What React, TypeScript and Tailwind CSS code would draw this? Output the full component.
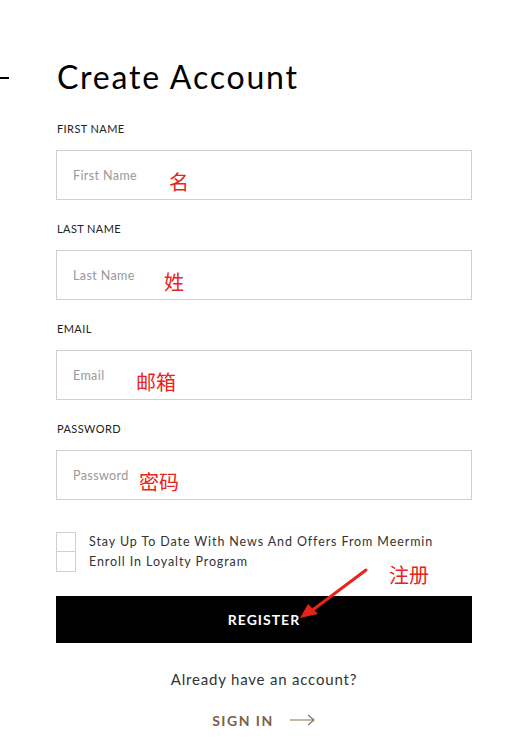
import React from 'react';

const fields = [
  { label: 'FIRST NAME', placeholder: 'First Name', note: '名', noteLeft: 'left-[112px]' },
  { label: 'LAST NAME', placeholder: 'Last Name', note: '姓', noteLeft: 'left-[107px]' },
  { label: 'EMAIL', placeholder: 'Email', note: '邮箱', noteLeft: 'left-[79px]' },
  { label: 'PASSWORD', placeholder: 'Password', note: '密码', noteLeft: 'left-[82px]' },
];

const App: React.FC = () => {
  return (
    <div className="relative w-[531px] h-[745px] bg-white overflow-hidden font-['Lato',sans-serif] text-black">
      {/* stray dash on the left edge */}
      <div className="absolute left-0 top-[77px] w-[9px] h-[2px] bg-black" />

      <div className="ml-[56px] w-[416px] pt-[57px]">
        <h1 className="text-[32px] leading-[40px] font-normal tracking-[1.8px] pl-[1px]">Create Account</h1>

        <form className="mt-[25px] flex flex-col gap-[22px]">
          {fields.map((f) => (
            <div key={f.label}>
              <label className="block text-[11px] leading-[13px] tracking-[0.4px] text-[#222] pl-[1px]">
                {f.label}
              </label>
              <div className="relative mt-[15px] h-[50px] border border-[#cfcfcf] flex items-center">
                <span className="pl-[16px] pt-[3px] text-[12.5px] tracking-[0.4px] text-[#999]">{f.placeholder}</span>
                <span
                  className={`absolute ${f.noteLeft} top-[19px] text-[20px] leading-[24px] text-[#e8231b] font-['Noto_Sans_CJK_SC',sans-serif]`}
                >
                  {f.note}
                </span>
              </div>
            </div>
          ))}
        </form>

        <div className="mt-[32px] flex flex-col">
          <div className="flex items-center gap-[13px]">
            <div className="w-[20px] h-[20px] border border-[#cfcfcf]" />
            <span className="text-[12.5px] tracking-[0.9px] text-[#333]">
              Stay Up To Date With News And Offers From Meermin
            </span>
          </div>
          <div className="flex items-center gap-[13px]">
            <div className="w-[20px] h-[20px] border border-[#cfcfcf] border-t-0" />
            <span className="text-[12.5px] tracking-[0.9px] text-[#333]">Enroll In Loyalty Program</span>
          </div>
        </div>

        <div className="relative mt-[24px]">
          <button className="w-full h-[47px] bg-black text-white text-[14px] font-bold tracking-[1px]">
            REGISTER
          </button>
          <span className="absolute left-[333px] -top-[33px] text-[20px] leading-[24px] text-[#e8231b] font-['Noto_Sans_CJK_SC',sans-serif]">
            注册
          </span>
          <svg className="absolute left-[240px] -top-[30px]" width="74" height="60" viewBox="0 0 74 60">
            <path d="M70 4 L14 46" stroke="#e8231b" strokeWidth="3" strokeLinecap="round" />
            <path d="M4 52 L12 38 L22 48 Z" fill="#e8231b" />
          </svg>
        </div>

        <p className="mt-[25px] text-center text-[15px] tracking-[0.8px] text-[#333]">Already have an account?</p>

        <div className="mt-[19px] flex items-center justify-center gap-[16px]">
          <span className="text-[14px] font-bold tracking-[1.5px] text-[#7a6245]">SIGN IN</span>
          <svg width="26" height="12" viewBox="0 0 26 12">
            <path d="M0 6 H24 M18 1 L24 6 L18 11" stroke="#8a7358" strokeWidth="1.2" fill="none" />
          </svg>
        </div>
      </div>
    </div>
  );
};

export default App;
